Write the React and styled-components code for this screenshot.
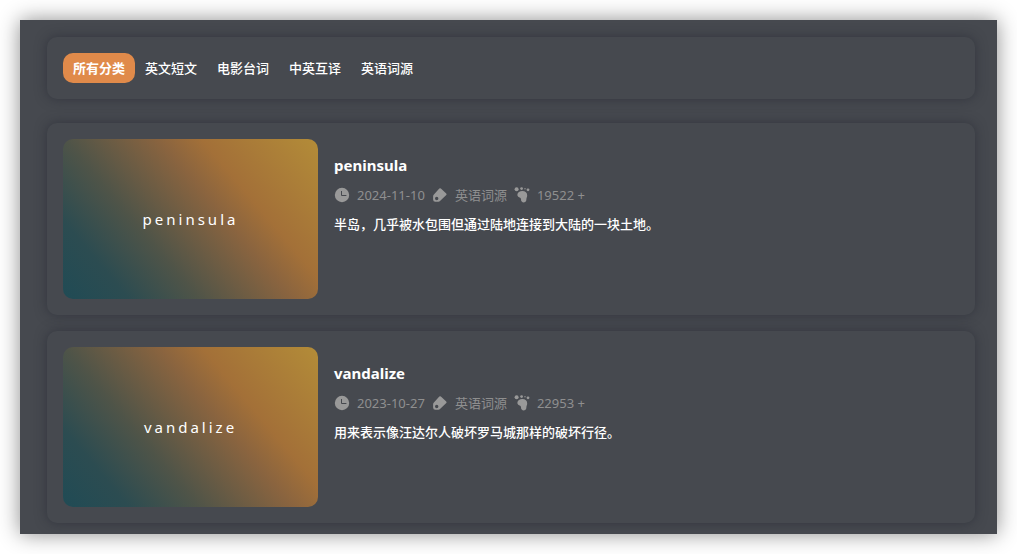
import styled, { createGlobalStyle } from "styled-components";

const categories = ["所有分类", "英文短文", "电影台词", "中英互译", "英语词源"];

const posts = [
  {
    title: "peninsula",
    date: "2024-11-10",
    category: "英语词源",
    views: "19522 +",
    text: "半岛，几乎被水包围但通过陆地连接到大陆的一块土地。",
  },
  {
    title: "vandalize",
    date: "2023-10-27",
    category: "英语词源",
    views: "22953 +",
    text: "用来表示像汪达尔人破坏罗马城那样的破坏行径。",
  },
];

export default function App() {
  return (
    <>
      <GlobalStyle />
      <Page>
        <Nav>
          {categories.map((name, i) => (
            <Tab key={name} href="#" $active={i === 0}>
              {name}
            </Tab>
          ))}
        </Nav>
        <List>
          {posts.map((post) => (
            <Post key={post.title} {...post} />
          ))}
        </List>
      </Page>
    </>
  );
}

function Post({ title, date, category, views, text }) {
  return (
    <Card>
      <Cover href="#">{title}</Cover>
      <Info>
        <Title>{title}</Title>
        <Meta>
          <ClockIcon />
          <span>{date}</span>
          <TagIcon />
          <span>{category}</span>
          <FootIcon />
          <span>{views}</span>
        </Meta>
        <Text>{text}</Text>
      </Info>
    </Card>
  );
}

function ClockIcon() {
  return (
    <Icon viewBox="0 0 16 16" aria-hidden="true">
      <circle cx="8" cy="8" r="7.2" />
      <path d="M7.5 4v4.5h4.9" fill="none" stroke="#46494f" strokeWidth="1" />
    </Icon>
  );
}

function TagIcon() {
  return (
    <Icon viewBox="0 0 16 16" aria-hidden="true">
      <path
        fillRule="evenodd"
        d="M7.3 1.6q.8-.8 1.6 0l5.3 4.9q.8.8.1 1.6L8 14.1q-.6.6-1.5.6H3.3q-2.2 0-2.2-2.2V9.3q0-.9.6-1.5zM4.7 9.8a1.7 1.7 0 1 0 0 3.4a1.7 1.7 0 1 0 0-3.4z"
      />
    </Icon>
  );
}

function FootIcon() {
  return (
    <Icon viewBox="0 0 16 16" aria-hidden="true">
      <circle cx="2.6" cy="2.3" r="2" />
      <circle cx="7.6" cy="1.6" r="1.4" />
      <circle cx="11" cy="1.8" r=".7" />
      <circle cx="14" cy="2.8" r="1.4" />
      <path d="M3.4 7.5C3.6 5.3 5.8 4.1 8.3 4.1c3 0 5 1.7 4.9 4.3c-.1 1.7-.8 2.5-.8 3.9c0 1.7-.8 3.1-2.5 3.1c-1.9 0-2.9-1.4-2.9-3c0-1-.4-1.4-1.4-1.9C4.1 9.9 3.2 9 3.4 7.5z" />
    </Icon>
  );
}

const GlobalStyle = createGlobalStyle`
  * {
    box-sizing: border-box;
  }
  body {
    margin: 0;
    padding: 20px;
    background-color: #ffffff;
    font-family: "Noto Sans", "Noto Sans CJK SC", sans-serif;
    font-size: 13px;
    color: #ffffff;
  }
`;

const Page = styled.main`
  padding: 17px 22px 11px 27px;
  background-color: #46494f;
  box-shadow: 0 0 20px rgba(0, 0, 0, 0.45);
`;

const Panel = styled.div`
  display: flex;
  padding: 16px;
  border-radius: 10px;
  background-color: #46494f;
  box-shadow: 0 0 12px rgba(32, 33, 46, 0.5);
`;

const Nav = styled(Panel).attrs({ as: "nav" })`
  margin-bottom: 24px;
`;

const Tab = styled.a`
  padding: 0 10px;
  height: 30px;
  line-height: 30px;
  border-radius: 10px;
  color: #ffffff;
  text-decoration: none;
  font-weight: ${(props) => (props.$active ? 700 : 500)};
  background-color: ${(props) => (props.$active ? "#e08a4a" : "transparent")};
`;

const List = styled.section`
  display: flex;
  flex-direction: column;
  gap: 16px;
`;

const Card = styled(Panel).attrs({ as: "article" })`
  gap: 16px;
`;

const Cover = styled.a`
  display: flex;
  align-items: center;
  justify-content: center;
  flex: none;
  width: 255px;
  height: 160px;
  border-radius: 10px;
  background: linear-gradient(
    50deg,
    #204b55 0%,
    #2c4c51 17%,
    #4f5448 35%,
    #8a643f 59%,
    #a37038 70%,
    #b38c38 100%
  );
  color: #ffffff;
  font-size: 15px;
  letter-spacing: 3px;
  text-decoration: none;
`;

const Info = styled.div`
  flex: 1;
  min-width: 0;
  padding-top: 14px;
`;

const Title = styled.h2`
  margin: 0;
  font-size: 15px;
  line-height: 24px;
  font-weight: 700;
`;

const Meta = styled.div`
  display: flex;
  align-items: center;
  gap: 7px;
  margin: 8px 0;
  line-height: 20px;
  color: #8f8f8f;
`;

const Icon = styled.svg`
  flex: none;
  width: 16px;
  height: 16px;
  fill: #999999;
`;

const Text = styled.p`
  margin: 0;
  line-height: 22px;
  font-weight: 500;
`;
